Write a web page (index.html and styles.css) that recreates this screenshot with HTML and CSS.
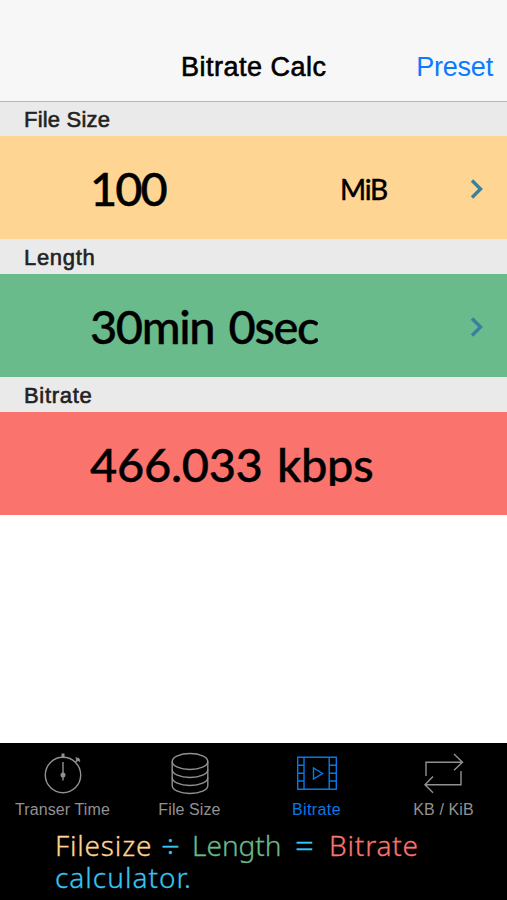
FILE: index.html
```
<!DOCTYPE html>
<html lang="en">
  <head>
    <meta charset="UTF-8" />
    <title>Bitrate Calc</title>
    <link rel="stylesheet" href="styles.css">
  </head>
  <body>
    <header class="navbar">
      <h1>Bitrate Calc</h1>
      <a class="preset">Preset</a>
    </header>

    <main>
      <h2>File Size</h2>
      <div class="row size">
        <span class="value number">100</span>
        <span class="unit">MiB</span>
        <svg class="chevron" width="14" height="22" viewBox="0 0 14 22"><path d="M2 2.5L10.5 11L2 19.5" /></svg>
      </div>
      <h2>Length</h2>
      <div class="row length">
        <span class="value time">30min 0sec</span>
        <svg class="chevron" width="14" height="22" viewBox="0 0 14 22"><path d="M2 2.5L10.5 11L2 19.5" /></svg>
      </div>
      <h2>Bitrate</h2>
      <div class="row bitrate">
        <span class="value rate">466.033 kbps</span>
      </div>
    </main>

    <nav class="tabbar">
      <div class="tab">
        <svg width="48" height="44" viewBox="0 0 48 44">
          <circle cx="24" cy="23" r="17.7" />
          <path d="M24 10V28.5M24 2V6" />
          <path d="M36 10.5L39 7.5M36.7 5.5L41 9.5" />
          <path d="M24 1.5V5M38 6.5L40 8.5" class="thick" />
          <circle cx="24" cy="23" r="1.8" class="dot" />
        </svg>
        <span>Transer Time</span>
      </div>
      <div class="tab">
        <svg width="48" height="44" viewBox="0 0 48 44">
          <ellipse cx="24" cy="9.5" rx="17.8" ry="8" />
          <path d="M6.2 9.5V33.5C6.2 38 14 41.5 24 41.5S41.8 38 41.8 33.5V9.5" />
          <path d="M6.2 17.5C6.2 22 14 25.5 24 25.5S41.8 22 41.8 17.5M6.2 25.5C6.2 30 14 33.5 24 33.5S41.8 30 41.8 25.5" />
        </svg>
        <span>File Size</span>
      </div>
      <div class="tab active">
        <svg width="48" height="44" viewBox="0 0 48 44">
          <path d="M4.7 5.2H43.3V37.2H4.7ZM11 5.2V37.2M36.2 5.2V37.2" />
          <path d="M4.7 13.3H11M4.7 21.2H11M4.7 29H11M36.2 13.3H43.3M36.2 21.2H43.3M36.2 29H43.3" />
          <path d="M20.5 16V27L29.5 21.5Z" />
        </svg>
        <span>Bitrate</span>
      </div>
      <div class="tab">
        <svg width="48" height="44" viewBox="0 0 48 44">
          <path d="M6 24V10.2H42.5M34 2L42.5 10.2L34 18.3" />
          <path d="M41 19V32.7H5M13 24.5L5 32.7L13 40.8" />
        </svg>
        <span>KB / KiB</span>
      </div>
    </nav>

    <footer>
      <p>
        <span class="word yellow">Filesize</span>
        <span class="word sign">÷</span>
        <span class="word green">Length</span>
        <span class="word sign">=</span>
        <span class="word red">Bitrate</span>
      </p>
      <p class="last">calculator.</p>
    </footer>
  </body>
</html>
```
FILE: styles.css
```
body {
  margin: 0;
  height: 900px;
  display: flex;
  flex-direction: column;
  overflow: hidden;
  background-color: white;
  color: black;
  font-family: "Liberation Sans", Arial, sans-serif;
}
h1,
h2,
p {
  margin: 0;
}
.navbar {
  box-sizing: border-box;
  height: 102px;
  padding: 34px 14px 0 0;
  display: grid;
  grid-template-columns: 181px 1fr auto;
  align-items: center;
  background-color: #f7f7f7;
  border-bottom: 1px solid #b7b7b7;
}
h1 {
  grid-column: 2;
  font-size: 27px;
  font-weight: 400;
  letter-spacing: 0.5px;
  -webkit-text-stroke: 0.6px black;
}
.preset {
  font-size: 27px;
  letter-spacing: -0.2px;
  color: #0a7aff;
}
main {
  flex: 1;
}
h2 {
  height: 35px;
  padding-left: 24px;
  line-height: 37px;
  font-size: 22px;
  font-weight: 400;
  letter-spacing: 0.7px;
  color: #222;
  background-color: #eaeaea;
  -webkit-text-stroke: 0.6px #222;
}
h2:first-child {
  height: 34px;
  line-height: 36px;
  letter-spacing: 0.2px;
}
.row {
  box-sizing: border-box;
  height: 103px;
  padding: 0 23px 0 90px;
  display: flex;
  align-items: center;
  font-family: Lato, sans-serif;
}
.size {
  background-color: #ffd593;
}
.length {
  background-color: #69bb8b;
}
.bitrate {
  background-color: #fb736d;
}
.value {
  height: 45px;
  line-height: 47px;
  overflow: hidden;
  font-size: 47px;
  font-weight: 500;
  white-space: nowrap;
  -webkit-text-stroke: 0.4px black;
}
.number {
  width: 250px;
  letter-spacing: -2px;
}
.time {
  letter-spacing: -1.4px;
  word-spacing: 4px;
}
.rate {
  letter-spacing: -0.3px;
  word-spacing: 3px;
}
.unit {
  font-size: 28px;
  font-weight: 500;
  letter-spacing: -1.2px;
  padding-top: 2px;
  -webkit-text-stroke: 0.3px black;
}
.chevron {
  margin-left: auto;
  padding-top: 2px;
  fill: none;
  stroke: #397f9f;
  stroke-width: 3.4;
}
.tabbar {
  height: 82px;
  display: grid;
  grid-template-columns: repeat(4, 127px);
  background-color: black;
}
.tab {
  padding-top: 9px;
  width: 125px;
  display: flex;
  flex-direction: column;
  align-items: center;
  color: #929292;
  font-size: 16px;
  letter-spacing: 0.1px;
}
.tab span {
  margin-top: 5px;
  white-space: nowrap;
}
.tab svg {
  margin-left: 1px;
  fill: none;
  stroke: currentColor;
  stroke-width: 1.4;
}
.tab .thick {
  stroke-width: 3;
}
.tab .dot {
  fill: currentColor;
}
.tab.active {
  color: #0878e8;
}
.tab.active span {
  letter-spacing: 0.4px;
}
footer {
  height: 75px;
  padding-left: 55px;
  background-color: black;
  color: #37c5ef;
  font-family: "Noto Sans", sans-serif;
  font-size: 28px;
  font-weight: 300;
  letter-spacing: 0.8px;
  line-height: 31px;
  -webkit-text-stroke: 0.3px currentColor;
}
footer p {
  display: grid;
  grid-template-columns: 106px 31px 103px 34px auto;
  padding-top: 5px;
  height: 32px;
}
footer .last {
  display: block;
  padding-top: 0;
  letter-spacing: 1px;
}
.sign {
  font-size: 33px;
}
.yellow {
  color: #ffd593;
}
.green {
  color: #69bb8b;
  letter-spacing: 0;
}
.red {
  color: #fb736d;
}
```
